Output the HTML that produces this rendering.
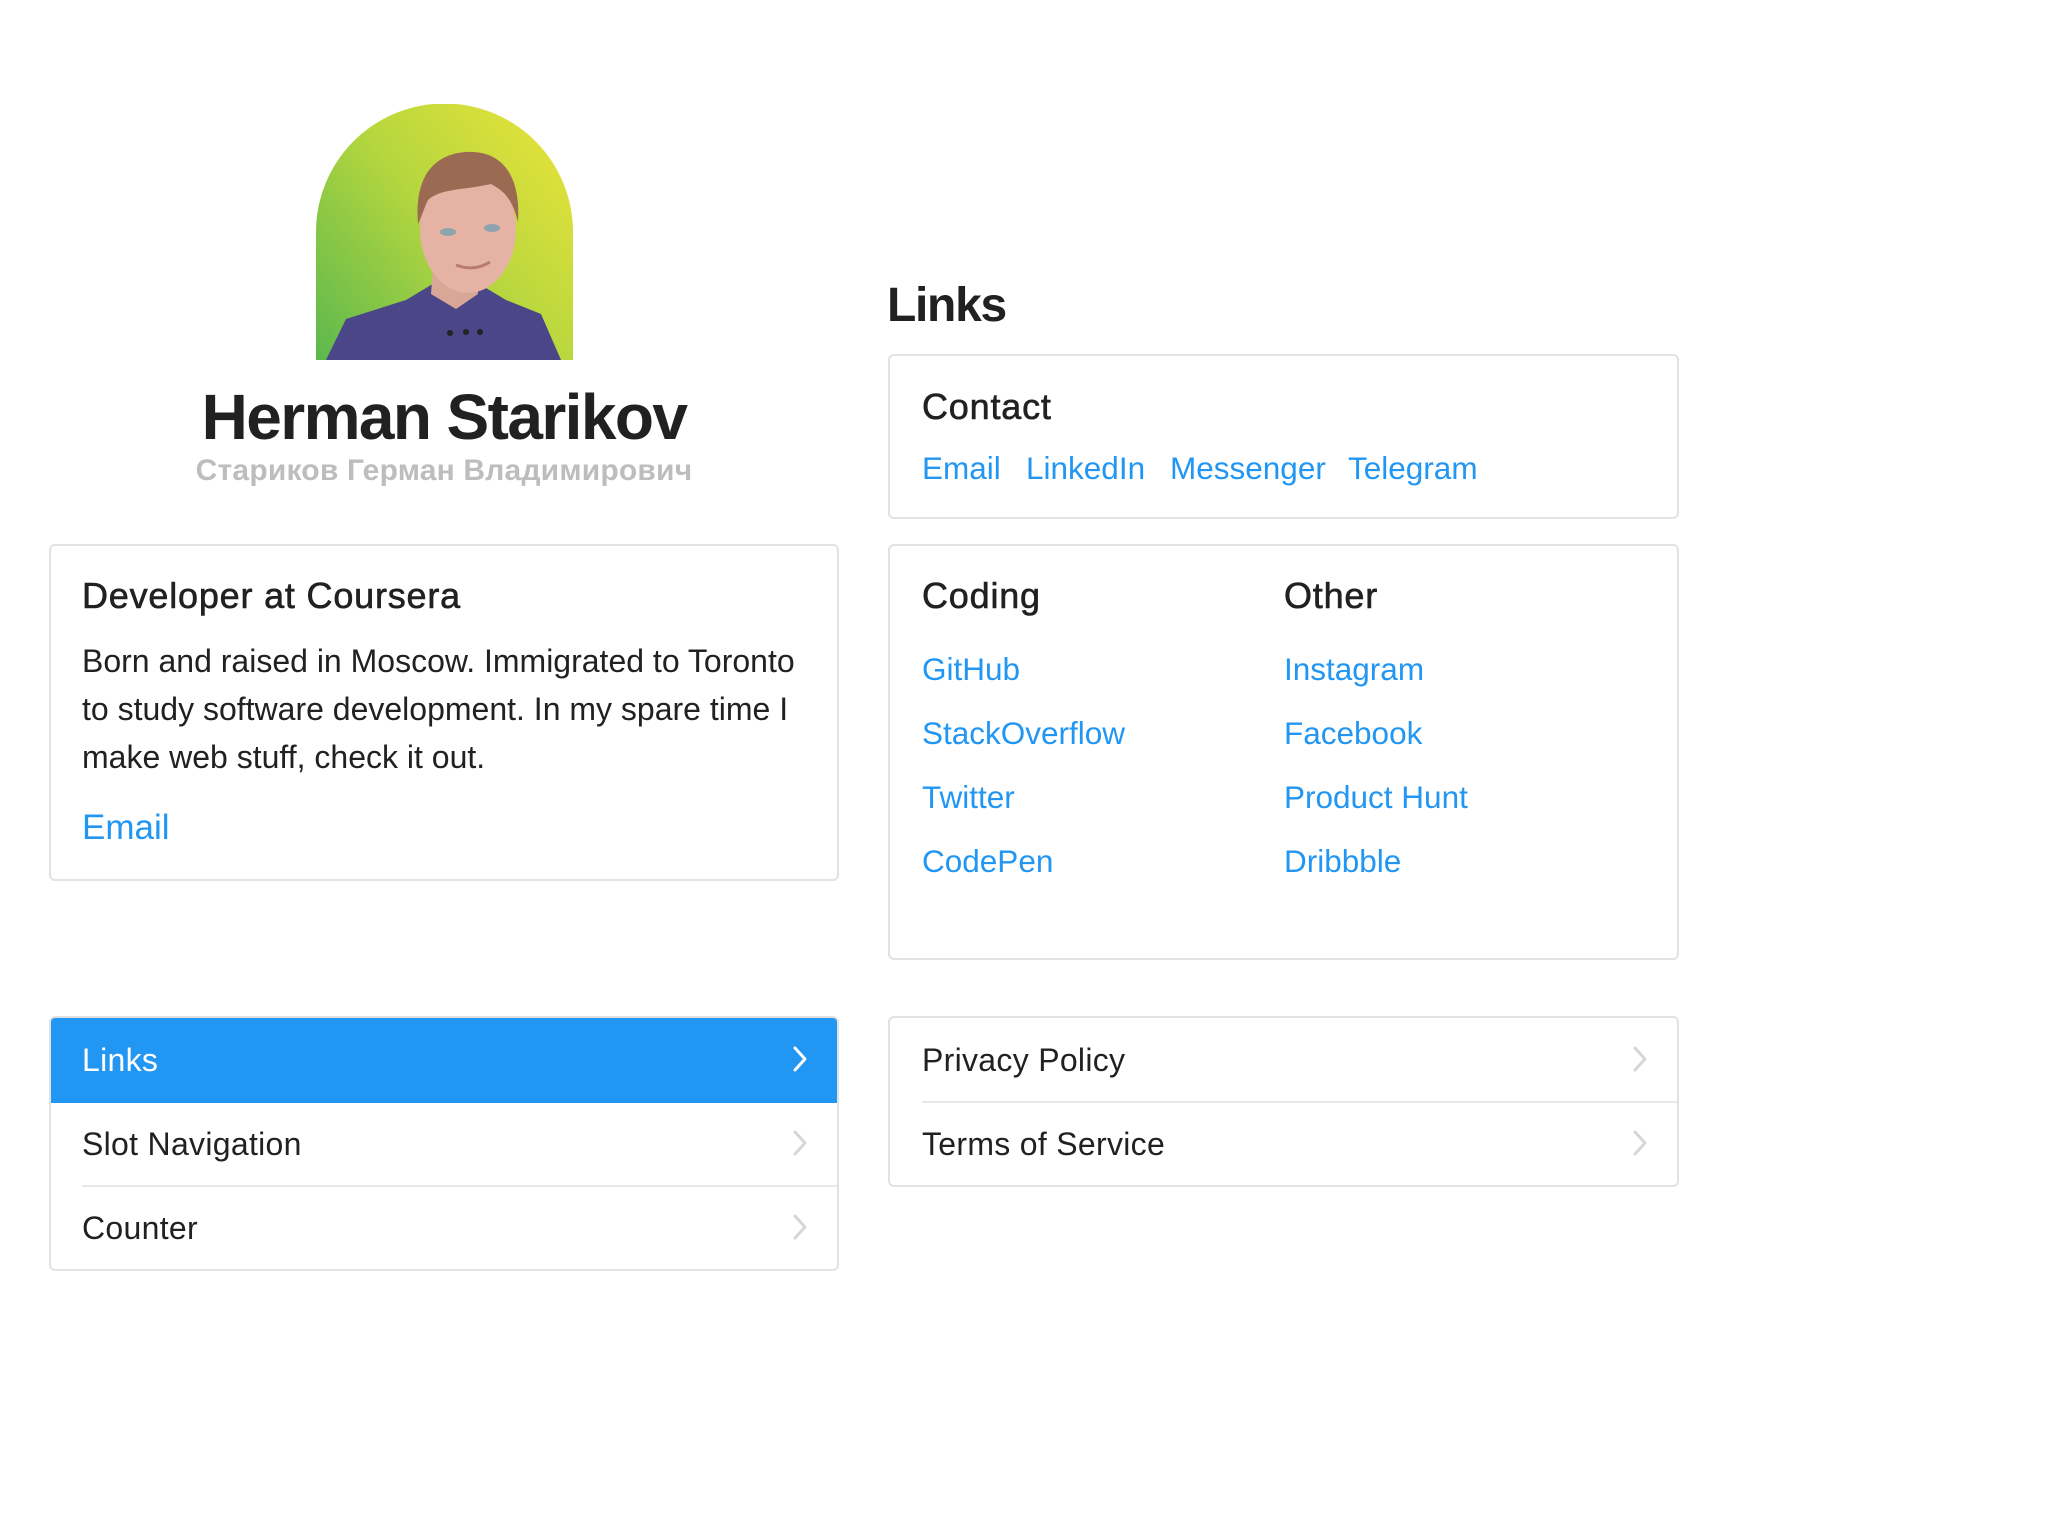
<!DOCTYPE html>
<html><head><meta charset="utf-8"><style>
*{margin:0;padding:0;box-sizing:border-box}
body{width:2048px;height:1536px;background:#fff;position:relative;font-family:"Liberation Sans",Arial,sans-serif;color:#212121;overflow:hidden}
.t{position:absolute;white-space:nowrap}
.card{position:absolute;border:2px solid #e2e2e2;border-radius:6px;background:#fff}
.a{color:#2196f3}
.med{-webkit-text-stroke:0.6px #212121;font-size:36px!important;letter-spacing:0.8px!important}
.hr{position:absolute;height:2px;background:#e8e8e8}
svg.ch{position:absolute}
.l{font-size:31.5px;line-height:40px;letter-spacing:0}
</style></head><body>

<svg style="position:absolute;left:316px;top:104px" width="257" height="256" viewBox="0 0 257 256">
<defs>
<linearGradient id="g" x1="0" y1="1" x2="1" y2="0.2">
<stop offset="0" stop-color="#5cb84e"/><stop offset="0.55" stop-color="#b5d63e"/><stop offset="1" stop-color="#e3e23a"/>
</linearGradient>
<clipPath id="c"><path d="M0 256 V128 A128.5 128.5 0 0 1 257 128 V256 Z"/></clipPath>
</defs>
<g clip-path="url(#c)">
<rect width="257" height="256" fill="url(#g)"/>
<path d="M90 196 L125 175 L155 175 L190 196 L225 210 L245 256 L10 256 L30 215 Z" fill="#4a4688"/>
<path d="M118 150 L160 150 L162 190 L140 205 L115 190 Z" fill="#d9a796"/>
<ellipse cx="152" cy="125" rx="48" ry="64" fill="#e5b3a4"/>
<path d="M102 120 C98 70 120 50 150 48 C185 46 205 70 202 118 C196 96 190 88 175 80 C150 86 125 84 112 96 C108 104 106 112 102 120 Z" fill="#9b6a52"/>
<ellipse cx="132" cy="128" rx="8" ry="4" fill="#8ea3ad"/>
<ellipse cx="176" cy="124" rx="8" ry="4" fill="#8ea3ad"/>
<path d="M140 161 Q158 168 174 158" stroke="#b87b70" stroke-width="3" fill="none"/>
<circle cx="134" cy="229" r="3" fill="#222"/><circle cx="150" cy="228" r="3" fill="#222"/><circle cx="164" cy="228" r="3" fill="#222"/>
</g>
</svg>

<div class="t" style="left:0;width:888px;text-align:center;top:381px;font-size:64px;line-height:72px;font-weight:bold;letter-spacing:-1.6px">Herman Starikov</div>
<div class="t" style="left:0;width:888px;text-align:center;top:453px;font-size:30px;line-height:36px;font-weight:bold;color:#bdbdbd;letter-spacing:0.2px">Стариков Герман Владимирович</div>

<div class="card" style="left:49px;top:544px;width:790px;height:337px"></div>
<div class="t med" style="left:82px;top:575px;line-height:42px">Developer at Coursera</div>
<div class="t" style="left:82px;top:637px;font-size:32px;line-height:48px;letter-spacing:0;white-space:normal;width:760px">Born and raised in Moscow. Immigrated to Toronto<br>to study software development. In my spare time I<br>make web stuff, check it out.</div>
<div class="t a" style="left:82px;top:807px;font-size:35px;line-height:42px;letter-spacing:0">Email</div>

<div class="t" style="left:887px;top:278px;font-size:48px;line-height:56px;font-weight:bold;letter-spacing:-1.3px">Links</div>

<div class="card" style="left:888px;top:354px;width:791px;height:165px"></div>
<div class="t med" style="left:922px;top:386px;line-height:42px">Contact</div>
<div class="t a l" style="left:922px;top:448px">Email</div>
<div class="t a l" style="left:1026px;top:448px">LinkedIn</div>
<div class="t a l" style="left:1170px;top:448px">Messenger</div>
<div class="t a l" style="left:1348px;top:448px">Telegram</div>

<div class="card" style="left:888px;top:544px;width:791px;height:416px"></div>
<div class="t med" style="left:922px;top:575px;line-height:42px">Coding</div>
<div class="t med" style="left:1284px;top:575px;line-height:42px">Other</div>
<div class="t a l" style="left:922px;top:649px">GitHub</div>
<div class="t a l" style="left:922px;top:713px">StackOverflow</div>
<div class="t a l" style="left:922px;top:777px">Twitter</div>
<div class="t a l" style="left:922px;top:841px">CodePen</div>
<div class="t a l" style="left:1284px;top:649px">Instagram</div>
<div class="t a l" style="left:1284px;top:713px">Facebook</div>
<div class="t a l" style="left:1284px;top:777px">Product Hunt</div>
<div class="t a l" style="left:1284px;top:841px">Dribbble</div>

<div class="card" style="left:49px;top:1016px;width:790px;height:255px;overflow:hidden">
<div style="position:absolute;left:0;top:0;width:100%;height:85px;background:#2196f3"></div>
</div>
<div class="hr" style="left:82px;top:1185px;width:755px"></div>
<div class="t" style="left:82px;top:1040px;font-size:32px;line-height:40px;color:#fff;letter-spacing:0.3px">Links</div>
<div class="t" style="left:82px;top:1124px;font-size:32px;line-height:40px;letter-spacing:0.3px">Slot Navigation</div>
<div class="t" style="left:82px;top:1208px;font-size:32px;line-height:40px;letter-spacing:0.3px">Counter</div>
<svg class="ch" style="left:790px;top:1045px" width="20" height="28"><polyline points="5,3 15,14 5,25" fill="none" stroke="#fff" stroke-width="3" stroke-linecap="round" stroke-linejoin="round"/></svg>
<svg class="ch" style="left:790px;top:1129px" width="20" height="28"><polyline points="5,3 15,14 5,25" fill="none" stroke="#d6d6d6" stroke-width="3" stroke-linecap="round" stroke-linejoin="round"/></svg>
<svg class="ch" style="left:790px;top:1213px" width="20" height="28"><polyline points="5,3 15,14 5,25" fill="none" stroke="#d6d6d6" stroke-width="3" stroke-linecap="round" stroke-linejoin="round"/></svg>

<div class="card" style="left:888px;top:1016px;width:791px;height:171px"></div>
<div class="hr" style="left:922px;top:1101px;width:755px"></div>
<div class="t" style="left:922px;top:1040px;font-size:32px;line-height:40px;letter-spacing:0.3px">Privacy Policy</div>
<div class="t" style="left:922px;top:1124px;font-size:32px;line-height:40px;letter-spacing:0.3px">Terms of Service</div>
<svg class="ch" style="left:1630px;top:1045px" width="20" height="28"><polyline points="5,3 15,14 5,25" fill="none" stroke="#d6d6d6" stroke-width="3" stroke-linecap="round" stroke-linejoin="round"/></svg>
<svg class="ch" style="left:1630px;top:1129px" width="20" height="28"><polyline points="5,3 15,14 5,25" fill="none" stroke="#d6d6d6" stroke-width="3" stroke-linecap="round" stroke-linejoin="round"/></svg>

</body></html>
